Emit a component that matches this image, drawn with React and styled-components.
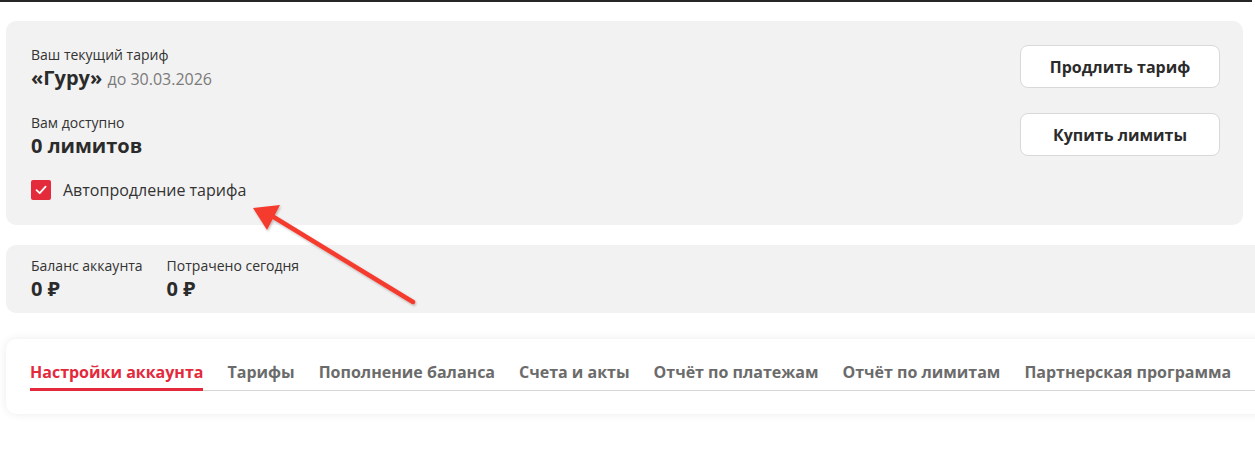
import styled, { createGlobalStyle } from "styled-components";

const GlobalStyle = createGlobalStyle`
  body {
    margin: 0;
    background: #ffffff;
    font-family: "Open Sans", "Noto Sans", sans-serif;
    color: #333333;
    overflow: hidden;
  }
`;

const tabs = [
  "Настройки аккаунта",
  "Тарифы",
  "Пополнение баланса",
  "Счета и акты",
  "Отчёт по платежам",
  "Отчёт по лимитам",
  "Партнерская программа",
];

const App = () => {
  return (
    <Page>
      <GlobalStyle />
      <TopLine />

      <Content>
        <TariffCard>
          <div>
            <Label>Ваш текущий тариф</Label>
            <Title>
              «Гуру» <Muted>до 30.03.2026</Muted>
            </Title>

            <Label $top={21}>Вам доступно</Label>
            <Title>0 лимитов</Title>

            <CheckRow>
              <Box>
                <svg width="14" height="14" viewBox="0 0 14 14">
                  <path
                    d="M2.5 7.2 L5.7 10.2 L11.6 3.6"
                    fill="none"
                    stroke="#ffffff"
                    strokeWidth="1.8"
                    strokeLinecap="round"
                    strokeLinejoin="round"
                  />
                </svg>
              </Box>
              Автопродление тарифа
            </CheckRow>
          </div>

          <Buttons>
            <Button>Продлить тариф</Button>
            <Button>Купить лимиты</Button>
          </Buttons>
        </TariffCard>

        <BalanceCard>
          <Stat>
            <Label>Баланс аккаунта</Label>
            <Title>0 ₽</Title>
          </Stat>
          <Stat>
            <Label>Потрачено сегодня</Label>
            <Title>0 ₽</Title>
          </Stat>
        </BalanceCard>

        <TabsCard>
          <TabList>
            {tabs.map((t, i) => (
              <Tab key={t} $active={i === 0}>
                {t}
              </Tab>
            ))}
          </TabList>
        </TabsCard>
      </Content>

      {/* красная стрелка-аннотация поверх страницы */}
      <Arrow width="200" height="130" viewBox="0 0 200 130">
        <defs>
          <filter id="sh" x="-20%" y="-20%" width="140%" height="140%">
            <feDropShadow dx="1" dy="1.5" stdDeviation="1.2" floodColor="#000" floodOpacity="0.25" />
          </filter>
        </defs>
        <g filter="url(#sh)">
          <line x1="163" y1="102" x2="22" y2="16" stroke="#f53b2f" strokeWidth="4.5" strokeLinecap="round" />
          <polygon points="3,8 30,5 17,30" fill="#f53b2f" />
        </g>
      </Arrow>
    </Page>
  );
};

export default App;

// styled-components
const Page = styled.div`
  position: relative;
  width: 1255px;
  height: 450px;
  overflow: hidden;
`;

const TopLine = styled.div`
  width: 1252px;
  height: 2px;
  background: #262626;
`;

const Content = styled.div`
  display: flex;
  flex-direction: column;
  padding: 19px 0 0 6px;
`;

const TariffCard = styled.div`
  width: 1237px;
  box-sizing: border-box;
  display: flex;
  justify-content: space-between;
  align-items: flex-start;
  padding: 24px 23px 25px 25px;
  background: #f2f2f2;
  border-radius: 10px;
`;

const Label = styled.div`
  margin-top: ${(p) => p.$top || 0}px;
  font-size: 14px;
  line-height: 20px;
  color: #333333;
`;

const Title = styled.div`
  font-size: 20px;
  line-height: 25px;
  font-weight: 700;
  color: #2b2b2b;
`;

const Muted = styled.span`
  font-size: 16px;
  font-weight: 400;
  color: #7a7a7a;
`;

const CheckRow = styled.label`
  display: flex;
  align-items: center;
  gap: 12px;
  margin-top: 22px;
  height: 20px;
  font-size: 16px;
  color: #333333;
`;

const Box = styled.span`
  width: 20px;
  height: 20px;
  border-radius: 2px;
  background: #e32b3b;
  display: flex;
  align-items: center;
  justify-content: center;
`;

const Buttons = styled.div`
  display: flex;
  flex-direction: column;
  gap: 25px;
`;

const Button = styled.button`
  width: 200px;
  height: 43px;
  box-sizing: border-box;
  background: #ffffff;
  border: 1px solid #d9d9d9;
  border-radius: 8px;
  font-family: "Open Sans", "Noto Sans", sans-serif;
  font-size: 16px;
  font-weight: 700;
  color: #2b2b2b;
`;

const BalanceCard = styled.div`
  width: 1300px;
  box-sizing: border-box;
  margin-top: 20px;
  display: flex;
  gap: 24px;
  padding: 11px 25px 12px 25px;
  background: #f2f2f2;
  border-radius: 10px;
`;

const Stat = styled.div``;

const TabsCard = styled.div`
  width: 1300px;
  box-sizing: border-box;
  margin-top: 26px;
  padding: 22px 0 23px 24px;
  background: #ffffff;
  border-radius: 10px;
  box-shadow: 0 0 10px rgba(0, 0, 0, 0.08);
`;

const TabList = styled.div`
  display: flex;
  gap: 24px;
  border-bottom: 1px solid #d6d6d6;
`;

const Tab = styled.div`
  padding-bottom: 5px;
  margin-bottom: -1px;
  font-size: 16px;
  line-height: 22px;
  font-weight: 700;
  white-space: nowrap;
  color: ${(p) => (p.$active ? "#e3293b" : "#6b6b6b")};
  border-bottom: 3px solid ${(p) => (p.$active ? "#e3293b" : "transparent")};
`;

const Arrow = styled.svg`
  position: absolute;
  left: 250px;
  top: 200px;
  overflow: visible;
`;
